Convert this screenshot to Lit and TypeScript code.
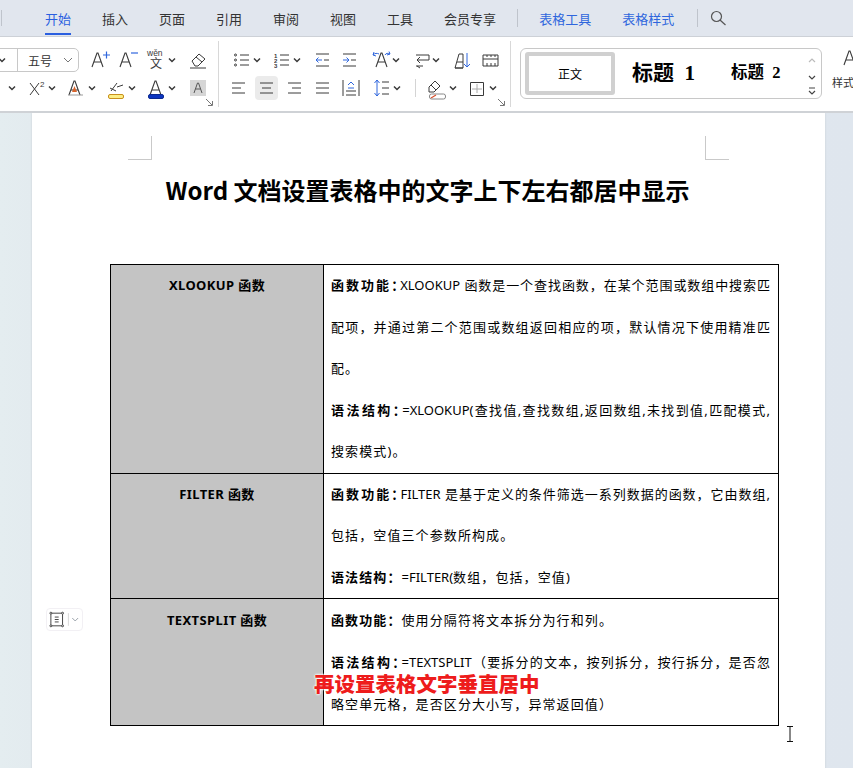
import { LitElement, css, html, svg } from 'lit'
import { customElement } from 'lit/decorators.js'

const BLUE = '#2f66dd'
const INK = '#3a3a3a'

// small dropdown arrow, x is the centre inside the tool box
const chev = (x: number) => svg`<path d="M${x - 3} 10.5l3 3 3-3" fill="none" stroke="${INK}" stroke-width="1.5"/>`
const line = (d: string, c = INK, w = 1) => svg`<path d="${d}" fill="none" stroke="${c}" stroke-width="${w}"/>`

const tool = (w: number, body: unknown) => html`<svg class="tool" width="${w}" height="24" viewBox="0 0 ${w} 24">${body}</svg>`

const bigA = (x: number, c = INK) => line(`M${x} 19l5-14h1l5 14M${x + 2} 14h7`, c, 1.1)

const row1a = [
  tool(28, svg`${bigA(4)}${line('M15 7h7M18.5 3.5v7', BLUE, 1.2)}`),
  tool(28, svg`${bigA(4)}${line('M15 5h7', BLUE, 1.2)}`),
  tool(42, svg`<text x="3" y="8" font-size="8.500" font-family="Liberation Sans" fill="${INK}">wěn</text><text x="6" y="20" font-size="12" font-family="Noto Sans CJK SC" fill="${INK}">文</text>${chev(28)}`),
  tool(24, svg`${line('M6 13l7-7 6 5-7 7h-3zM10 9l6 5M4 20h16')}`),
]

const row2a = [
  tool(24, svg`${chev(12)}`),
  tool(36, svg`${line('M6 7l9 12M15 7l-9 12')}<text x="16" y="11" font-size="8" font-family="Liberation Sans" fill="${INK}">2</text>${chev(28)}`),
  tool(40, svg`${bigA(9)}<path d="M12 16l2.5-6 2.5 6z" fill="#d8642c"/>${line('M8 19h15', '#9a9a9a')}${chev(32)}`),
  tool(44, svg`${line('M11 15l6-8M10 12l6 3M17 11l6-2')}<rect x="8.5" y="18.5" width="15" height="4" rx="1.5" fill="#fdee84" stroke="#c78f1c"/>${chev(32)}`),
  tool(42, svg`${bigA(6)}<rect x="4.5" y="18.5" width="15" height="4" rx="1.5" fill="#0c35c0" stroke="#0c2a90"/>${chev(28)}`),
  tool(24, svg`<rect x="4" y="4" width="16" height="16" fill="#d6d6d6"/>${line('M8 17l3.5-10h1l3.5 10M9.5 13h5', '#555', 1)}`),
]

const row1b = [
  tool(40, svg`<g fill="none" stroke="${INK}"><circle cx="1.5" cy="7" r="1"/><circle cx="1.5" cy="12" r="1"/><circle cx="1.5" cy="17" r="1"/></g>${line('M6 7h9M6 12h9M6 17h9')}${chev(23)}`),
  tool(41, svg`<text x="0" y="10" font-size="6" font-family="Liberation Sans" font-weight="700" fill="${INK}">1</text><text x="0" y="15" font-size="6" font-family="Liberation Sans" font-weight="700" fill="${INK}">2</text><text x="0" y="20" font-size="6" font-family="Liberation Sans" font-weight="700" fill="${INK}">3</text>${line('M6 7h9M6 12h9M6 17h9')}${chev(23)}`),
  tool(27, svg`${line('M1 6h13M9 12h5M1 18h13')}${line('M7 12H1M3.5 9.5L1 12l2.5 2.5', BLUE)}`),
  tool(30, svg`${line('M1 6h13M9 12h5M1 18h13')}${line('M1 12h6M4.5 9.5L7 12l-2.5 2.5', BLUE)}`),
  tool(42, svg`${bigA(4)}${line('M1 7c2-2 4-2 6-1M18 6c-2-1-4-1-5 1M1 7l1-3M1 7l3 1M18 6l-1-2.5M18 6l-3 1', BLUE)}${chev(24)}`),
  tool(40, svg`${line('M2 7h13M15 7v5H3M6 9l-3 3 3 3M2 18h7M6 20l-3-2')}${chev(22)}`),
  tool(28, svg`${line('M1 20l4-14h4v14zM1 20h8M3 14h6')}${line('M13 5v14M10 16l3 3 3-3', BLUE)}`),
  tool(20, svg`${line('M1 7h15v11H1zM1 11h15M5 7v2M9 7v2M13 7v2M5 15v3M9 15v3M13 15v3')}`),
]

const row2b = [
  tool(23, svg`${line('M0 7h13M0 12h9M0 17h13')}`),
  html`<span class="on">${tool(23, svg`${line('M5 7h13M7 12h9M5 17h13')}`)}</span>`,
  tool(28, svg`${line('M10 7h13M14 12h9M10 17h13')}`),
  tool(27, svg`${line('M10 7h13M10 12h13M10 17h13')}`),
  tool(30, svg`${line('M10 4v16M26 4v16M13 19h10M13 15h10')}${line('M15 9l3-3 3 3M15 12h6', BLUE)}`),
  tool(52, svg`${line('M14 4v16M11.5 7L14 4l2.5 3M11.5 17L14 20l2.5-3', BLUE)}${line('M19 6h7M19 12h7M19 18h7')}${chev(34)}`),
  html`<i class="vsep"></i>`,
  tool(41, svg`${line('M19 5l5 5-6 6h-5v-5zM15 9l5 5')}<rect x="13.5" y="18" width="16" height="5" rx="2" fill="#fff" stroke="#888"/>${line('M15 22l5-3', '#d8502c', 1.2)}${chev(37)}`),
  tool(42, svg`${line('M13.500 6.500h13v13h-13z')}${line('M20 8v9M15 13h10', '#aaa')}${chev(36)}`),
]

@customElement('app-root')
export class AppRoot extends LitElement {
  static styles = css`
    :host {
      display: block;
      height: 768px;
      overflow: hidden;
      position: relative;
      font-family: 'Noto Sans CJK SC', 'Noto Sans', sans-serif;
      color: #000;
    }
    .tabs {
      display: flex;
      align-items: center;
      height: 37px;
      padding-left: 45px;
      box-sizing: border-box;
      background: #e1e6ee;
      border-bottom: 1px solid #cdd1d7;
      font-size: 13px;
      color: #333;
      position: relative;
    }
    .tabs span {
      margin-right: 31px;
      line-height: 18px;
      padding: 7px 0 5px;
      border-bottom: 2px solid transparent;
      margin-top: 2px;
    }
    .tabs .active {
      color: #2a5fe0;
      border-bottom-color: #2a5fe0;
    }
    .tabs .blue {
      color: #2f66dd;
    }
    .tabs .member {
      margin-right: 21px;
    }
    .tabs i {
      width: 1px;
      height: 18px;
      background: #bfc4cc;
      margin-right: 21px;
    }
    .tabs .stub {
      position: absolute;
      left: 1px;
      top: 10px;
      height: 16px;
      margin: 0;
    }
    .tabs .last {
      margin-right: 23px;
    }
    .tabs svg {
      margin-left: -10px;
    }
    .ribbon {
      display: flex;
      height: 76px;
      box-sizing: border-box;
      background: #fff;
      border-bottom: 2px solid #cfd2d6;
      overflow: hidden;
    }
    .group {
      position: relative;
      flex: none;
      box-sizing: border-box;
      padding-top: 7px;
      display: flex;
      flex-direction: column;
      gap: 4px;
      height: 66px;
      margin-top: 4px;
      border-right: 1px solid #d8d8d8;
    }
    .g1 {
      width: 219px;
    }
    .g2 {
      width: 292px;
      padding-left: 15px;
    }
    .row {
      display: flex;
      align-items: center;
      height: 24px;
    }
    .g2 .second {
      margin-left: -2px;
    }
    .tool {
      display: block;
      flex: none;
    }
    .launch {
      position: absolute;
      right: 4px;
      bottom: 0;
    }
    .select {
      display: flex;
      align-items: center;
      box-sizing: border-box;
      width: 90px;
      height: 24px;
      margin-left: -11px;
      margin-right: 9px;
      padding-left: 38px;
      border: 1px solid #c8c8c8;
      border-radius: 5px;
      font-size: 12px;
      color: #333;
      position: relative;
    }
    .select .div {
      position: absolute;
      left: 27px;
      top: 0;
      bottom: 0;
      width: 1px;
      background: #c8c8c8;
    }
    .select svg {
      position: absolute;
      flex: none;
    }
    .select .c1 {
      left: 4px;
      top: -1px;
    }
    .select .c2 {
      right: 2px;
      top: -1px;
    }
    .on {
      display: block;
      background: #ebebeb;
      border-radius: 4px;
    }
    .vsep {
      display: block;
      width: 1px;
      height: 18px;
      background: #d4d4d4;
    }
    .gallery {
      flex: none;
      display: flex;
      align-items: center;
      box-sizing: border-box;
      width: 302px;
      height: 51px;
      margin: 11px 0 0 9px;
      padding-left: 4px;
      border: 1px solid #c8c8c8;
      border-radius: 6px;
      position: relative;
      font-family: 'Liberation Serif', 'Noto Sans CJK SC', serif;
    }
    .zw {
      box-sizing: border-box;
      width: 90px;
      height: 43px;
      border: 4px solid #d0d0d0;
      border-radius: 3px;
      text-align: center;
      line-height: 35px;
      font-size: 12px;
      font-family: 'Noto Sans CJK SC', sans-serif;
    }
    .h1 {
      margin: 0 0 5px 17px;
      font-size: 21px;
      font-weight: 700;
      white-space: pre;
    }
    .h2 {
      margin: 0 0 5px 36px;
      font-size: 16.5px;
      font-weight: 700;
      white-space: pre;
    }
    .scroll {
      position: absolute;
      right: 3px;
      top: 3px;
    }
    .styles {
      flex: none;
      margin-left: 10px;
      padding-top: 9px;
      font-size: 11px;
      color: #333;
      white-space: nowrap;
    }
    .styles svg {
      display: block;
      margin-left: 8px;
      margin-bottom: 4px;
    }
    .desk {
      height: 655px;
      padding: 0 28px 0 32px;
      background: linear-gradient(90deg, #e4edf0 0, #e3ebef 32px, #dfe6ee 100%);
      overflow: hidden;
    }
    .page {
      background: #fff;
      height: 700px;
      box-shadow: 0 0 2px #c8cdd4;
      padding: 23px 46px 0 78px;
    }
    .marks {
      display: flex;
      justify-content: space-between;
      margin: 0 50px 0 18px;
    }
    .mark {
      width: 23px;
      height: 23px;
      border-bottom: 1px solid #c9c9c9;
      border-right: 1px solid #c9c9c9;
    }
    .mark.r {
      border-right: 0;
      border-left: 1px solid #c9c9c9;
    }
    h1 {
      margin: 13px 34px 57px 0;
      height: 34px;
      font-size: 24px;
      line-height: 34px;
      font-weight: 700;
      text-align: center;
      letter-spacing: 0;
    }
    table {
      width: 669px;
      border-collapse: collapse;
      table-layout: fixed;
      font-family: 'Noto Sans', 'Noto Sans CJK SC', sans-serif;
      font-size: 13px;
      line-height: 41.6px;
      text-spacing-trim: space-all;
    }
    td {
      border: 1px solid #000;
      padding: 0;
      vertical-align: top;
    }
    .name {
      width: 212px;
      background: #c4c4c4;
      text-align: center;
      font-weight: 700;
      letter-spacing: 0.4px;
    }
    .body {
      padding: 0 8px 0 7px;
    }
    .l {
      display: block;
      height: 41.6px;
      white-space: nowrap;
      letter-spacing: 1.1px;
    }
    .l.j {
      white-space: normal;
      text-align: justify;
      text-align-last: justify;
      overflow: hidden;
      letter-spacing: 0;
    }
    .l.j b {
      margin-right: -6px;
    }
    .r2 td {
      line-height: 41.3px;
    }
    .r2 .l {
      height: 41.3px;
    }
    .r3 td {
      line-height: 42px;
    }
    .r3 .l {
      height: 42px;
    }
    b {
      font-weight: 700;
      letter-spacing: 1.1px;
    }
    .lat {
      letter-spacing: 0;
    }
    .handle {
      position: absolute;
      left: 46px;
      top: 608px;
      display: flex;
      align-items: center;
      width: 37px;
      height: 23px;
      box-sizing: border-box;
      border: 1px solid #f2f0f4;
      border-radius: 4px;
      background: #fff;
    }
    .note {
      position: absolute;
      left: 314px;
      top: 668px;
      font-size: 20.5px;
      line-height: 30px;
      font-weight: 900;
      color: #ee1c1c;
      white-space: nowrap;
      text-shadow: 0 0 2px #fff, 0 0 2px #fff, 0 0 3px #fff;
    }
    .cursor {
      position: absolute;
      left: 785px;
      top: 726px;
    }
  `

  render() {
    const launch = html`<svg class="launch" width="9" height="9" viewBox="0 0 9 9">
      <path d="M1 1l6 6M3 7.500h4.500V3" fill="none" stroke="#777"/>
    </svg>`
    return html`
      <div class="tabs">
        <i class="stub"></i>
        <span class="active">开始</span>
        <span>插入</span>
        <span>页面</span>
        <span>引用</span>
        <span>审阅</span>
        <span>视图</span>
        <span>工具</span>
        <span class="member">会员专享</span>
        <i></i>
        <span class="blue">表格工具</span>
        <span class="blue last">表格样式</span>
        <i></i>
        <svg width="18" height="18" viewBox="0 0 18 18">
          <circle cx="7.500" cy="7.500" r="5" fill="none" stroke="#555" stroke-width="1.200"/>
          <path d="M11 11l5.500 5" stroke="#555" stroke-width="1.200"/>
        </svg>
      </div>
      <div class="ribbon">
        <div class="group g1">
          <div class="row">
            <div class="select">
              <svg class="c1" width="16" height="24" viewBox="0 0 16 24">${chev(8)}</svg>
              <span class="div"></span>五号
              <svg class="c2" width="16" height="24" viewBox="0 0 16 24">${line('M4 10l4 4 4-4', '#777')}</svg>
            </div>
            ${row1a}
          </div>
          <div class="row">${row2a}</div>
          ${launch}
        </div>
        <div class="group g2">
          <div class="row">${row1b}</div>
          <div class="row second">${row2b}</div>
          ${launch}
        </div>
        <div class="gallery">
          <div class="zw">正文</div>
          <div class="h1">标题  1</div>
          <div class="h2">标题  2</div>
          <svg class="scroll" width="12" height="44" viewBox="0 0 12 44">
            <path d="M3 10l3-3 3 3" fill="none" stroke="#bbb" stroke-width="1.200"/>
            <path d="M3 24l3 3 3-3" fill="none" stroke="#444" stroke-width="1.200"/>
            <path d="M3 36h6M3 39l3 3 3-3" fill="none" stroke="#444" stroke-width="1.200"/>
          </svg>
        </div>
        <div class="styles">
          <svg width="22" height="24" viewBox="0 0 22 24">${bigA(4)}</svg>
          样式
        </div>
      </div>
      <div class="desk">
        <div class="page">
          <div class="marks"><div class="mark"></div><div class="mark r"></div></div>
          <h1>Word 文档设置表格中的文字上下左右都居中显示</h1>
          <table>
            <tr>
              <td class="name">XLOOKUP 函数</td>
              <td class="body">
                <span class="l j"><b>函数功能：</b>XLOOKUP 函数是一个查找函数，在某个范围或数组中搜索匹</span>
                <span class="l j">配项，并通过第二个范围或数组返回相应的项，默认情况下使用精准匹</span>
                <span class="l">配。</span>
                <span class="l j"><b>语法结构：</b>=XLOOKUP(查找值,查找数组,返回数组,未找到值,匹配模式,</span>
                <span class="l">搜索模式)。</span>
              </td>
            </tr>
            <tr class="r2">
              <td class="name">FILTER 函数</td>
              <td class="body">
                <span class="l j"><b>函数功能：</b>FILTER 是基于定义的条件筛选一系列数据的函数，它由数组,</span>
                <span class="l">包括，空值三个参数所构成。</span>
                <span class="l"><b>语法结构：</b><span class="lat">=FILTER(</span>数组，包括，空值)</span>
              </td>
            </tr>
            <tr class="r3">
              <td class="name">TEXTSPLIT 函数</td>
              <td class="body">
                <span class="l"><b>函数功能：</b>使用分隔符将文本拆分为行和列。</span>
                <span class="l j"><b>语法结构：</b>=TEXTSPLIT（要拆分的文本，按列拆分，按行拆分，是否忽</span>
                <span class="l">略空单元格，是否区分大小写，异常返回值）</span>
              </td>
            </tr>
          </table>
        </div>
      </div>
      <div class="handle">
        <svg width="36" height="21" viewBox="0 0 36 21">
          <path d="M4 4h12v13H4zM8 8h4M8 10.500h4M8 13h4" fill="none" stroke="#444"/>
          <g fill="#fff" stroke="#444"><circle cx="4" cy="4" r="1"/><circle cx="16" cy="4" r="1"/><circle cx="4" cy="17" r="1"/><circle cx="16" cy="17" r="1"/></g>
          <path d="M22 4v13" stroke="#d8d8d8"/>
          <path d="M26 9l3 3 3-3" fill="none" stroke="#98a0a8"/>
        </svg>
      </div>
      <div class="note">再设置表格文字垂直居中</div>
      <svg class="cursor" width="10" height="17" viewBox="0 0 10 17">
        <path d="M2 .5h6M5 .5v15M2 15.500h6" fill="none" stroke="#111"/>
      </svg>
    `
  }
}
